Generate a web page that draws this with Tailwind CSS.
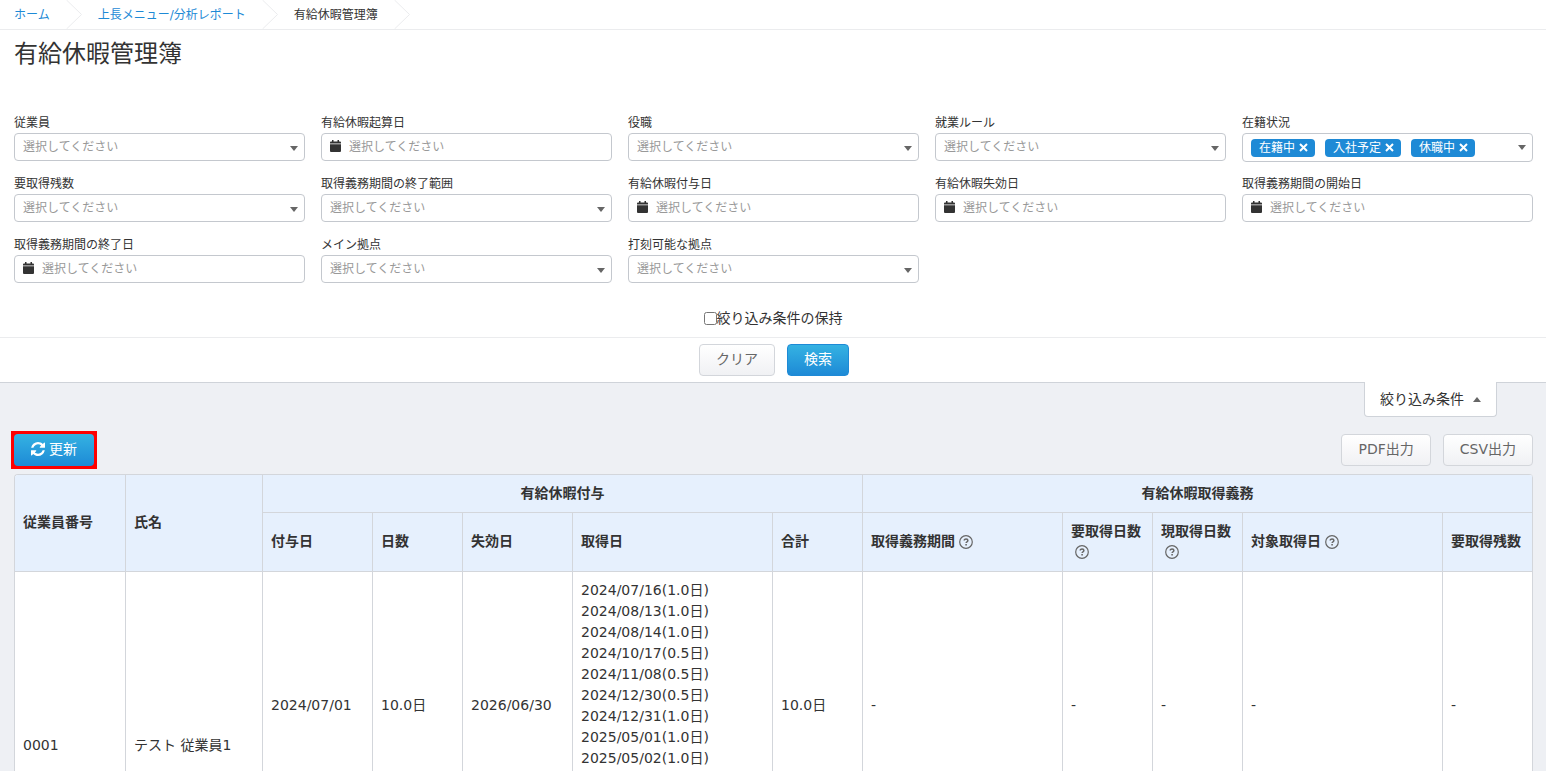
<!DOCTYPE html>
<html lang="ja">
<head>
  <meta charset="UTF-8" />
  <meta name="viewport" content="width=device-width, initial-scale=1.0" />
  <title>有給休暇管理簿</title>
  <script src="https://cdn.jsdelivr.net/npm/@tailwindcss/browser@4"></script>
</head>
<body class="h-screen overflow-hidden bg-[#eef0f4] font-['DejaVu_Sans','Noto_Sans_CJK_JP',sans-serif] text-sm text-[#333]">

  <!-- Icons -->
  <svg class="hidden">
    <symbol id="calendar" viewBox="0 0 11 12">
      <path d="M2 0h1.500v1.500h4V0H9v1.500h1a1 1 0 0 1 1 1V3.500H0V2.500a1 1 0 0 1 1-1h1zM0 4.200h11V11a1 1 0 0 1-1 1H1a1 1 0 0 1-1-1z" fill="currentColor" />
    </symbol>
    <symbol id="caret" viewBox="0 0 8 5">
      <path d="M0 0h8L4 5z" fill="currentColor" />
    </symbol>
    <symbol id="crumb" viewBox="0 0 16 29">
      <path d="M.5 0l15 14.500L.5 29" fill="none" stroke="#ebecee" />
    </symbol>
    <symbol id="close" viewBox="0 0 9 9">
      <path d="M1 1l7 7M8 1L1 8" fill="none" stroke="currentColor" stroke-width="2" />
    </symbol>
    <symbol id="help" viewBox="0 0 14 14">
      <circle cx="7" cy="7" r="6.300" fill="none" stroke="currentColor" stroke-width="1.200" />
      <path d="M5.200 5.600c0-2.200 3.700-2.100 3.700 0 0 1.300-1.800 1.200-1.800 2.500" fill="none" stroke="currentColor" stroke-width="1.500" />
      <path d="M6.300 9h1.600v1.500H6.300z" fill="currentColor" />
    </symbol>
    <symbol id="refresh" viewBox="0 0 1536 1536">
      <path d="M1511 928q0 5-1 7-64 268-268 434.500T764 1536q-146 0-282.500-55T238 1324l-129 129q-19 19-45 19t-45-19-19-45V960q0-26 19-45t45-19h448q26 0 45 19t19 45-19 45l-137 137q71 66 161 102t187 36q134 0 250-65t186-179q11-17 53-117 8-23 30-23h192q13 0 22.500 9.500t9.500 22.500zm25-800v448q0 26-19 45t-45 19h-448q-26 0-45-19t-19-45 19-45l138-138Q969 256 768 256q-134 0-250 65T332 500q-11 17-53 117-8 23-30 23H50q-13 0-22.500-9.500T18 608v-7q65-268 270-434.500T768 0q146 0 284 55.500T1297 212l130-129q19-19 45-19t45 19 19 45z" fill="currentColor" />
    </symbol>
  </svg>

  <div class="border-b border-[#cfd3d9] bg-white">
    <!-- Breadcrumb -->
    <nav class="flex h-[30px] items-center gap-4 border-b border-[#ebecee] pl-[14px] text-xs">
      <a href="#" class="text-[#1e8ad6]">ホーム</a>
      <svg class="h-[29px] w-4"><use href="#crumb" /></svg>
      <a href="#" class="text-[#1e8ad6]">上長メニュー/分析レポート</a>
      <svg class="h-[29px] w-4"><use href="#crumb" /></svg>
      <span>有給休暇管理簿</span>
      <svg class="h-[29px] w-4"><use href="#crumb" /></svg>
    </nav>

    <h1 class="mt-2 pl-[14px] text-2xl leading-8">有給休暇管理簿</h1>

    <!-- Filters -->
    <form>
      <div class="mt-[45px] grid grid-cols-5 items-start gap-x-4 pr-[13px] pl-[14px] text-xs">
        <div class="h-[61px]">
          <label for="employee" class="mb-[2px] block leading-4">従業員</label>
          <div class="relative">
            <select id="employee" class="h-7 w-full appearance-none rounded border border-[#c4c8ce] bg-white px-2 text-[#999]"><option>選択してください</option></select>
            <svg class="pointer-events-none absolute top-[13px] right-[7px] h-[5px] w-2 text-[#666]"><use href="#caret" /></svg>
          </div>
        </div>
        <div class="h-[61px]">
          <label for="startDate" class="mb-[2px] block leading-4">有給休暇起算日</label>
          <div class="flex h-7 items-center gap-2 rounded border border-[#c4c8ce] bg-white px-2">
            <svg class="mb-[2px] h-3 w-[11px] shrink-0"><use href="#calendar" /></svg>
            <input id="startDate" type="text" placeholder="選択してください" class="w-full outline-none placeholder:text-[#999]" />
          </div>
        </div>
        <div class="h-[61px]">
          <label for="position" class="mb-[2px] block leading-4">役職</label>
          <div class="relative">
            <select id="position" class="h-7 w-full appearance-none rounded border border-[#c4c8ce] bg-white px-2 text-[#999]"><option>選択してください</option></select>
            <svg class="pointer-events-none absolute top-[13px] right-[7px] h-[5px] w-2 text-[#666]"><use href="#caret" /></svg>
          </div>
        </div>
        <div class="h-[61px]">
          <label for="rule" class="mb-[2px] block leading-4">就業ルール</label>
          <div class="relative">
            <select id="rule" class="h-7 w-full appearance-none rounded border border-[#c4c8ce] bg-white px-2 text-[#999]"><option>選択してください</option></select>
            <svg class="pointer-events-none absolute top-[13px] right-[7px] h-[5px] w-2 text-[#666]"><use href="#caret" /></svg>
          </div>
        </div>
        <div class="h-[61px]" role="group" aria-labelledby="statusLabel">
          <span id="statusLabel" class="mb-[2px] block leading-4">在籍状況</span>
          <div class="flex h-[29px] items-center gap-[10px] rounded border border-[#c4c8ce] bg-white pr-[6px] pl-2 text-white">
            <button type="button" class="flex h-[18px] items-center gap-1 rounded bg-[#1e8ad6] pr-[7px] pl-2 leading-4">在籍中<svg class="h-[9px] w-[9px]"><use href="#close" /></svg></button>
            <button type="button" class="flex h-[18px] items-center gap-1 rounded bg-[#1e8ad6] pr-[7px] pl-2 leading-4">入社予定<svg class="h-[9px] w-[9px]"><use href="#close" /></svg></button>
            <button type="button" class="flex h-[18px] items-center gap-1 rounded bg-[#1e8ad6] pr-[7px] pl-2 leading-4">休職中<svg class="h-[9px] w-[9px]"><use href="#close" /></svg></button>
            <svg class="ml-auto h-[5px] w-2 text-[#666]"><use href="#caret" /></svg>
          </div>
        </div>

        <div class="h-[61px]">
          <label for="remaining" class="mb-[2px] block leading-4">要取得残数</label>
          <div class="relative">
            <select id="remaining" class="h-7 w-full appearance-none rounded border border-[#c4c8ce] bg-white px-2 text-[#999]"><option>選択してください</option></select>
            <svg class="pointer-events-none absolute top-[13px] right-[7px] h-[5px] w-2 text-[#666]"><use href="#caret" /></svg>
          </div>
        </div>
        <div class="h-[61px]">
          <label for="endRange" class="mb-[2px] block leading-4">取得義務期間の終了範囲</label>
          <div class="relative">
            <select id="endRange" class="h-7 w-full appearance-none rounded border border-[#c4c8ce] bg-white px-2 text-[#999]"><option>選択してください</option></select>
            <svg class="pointer-events-none absolute top-[13px] right-[7px] h-[5px] w-2 text-[#666]"><use href="#caret" /></svg>
          </div>
        </div>
        <div class="h-[61px]">
          <label for="grantDate" class="mb-[2px] block leading-4">有給休暇付与日</label>
          <div class="flex h-7 items-center gap-2 rounded border border-[#c4c8ce] bg-white px-2">
            <svg class="mb-[2px] h-3 w-[11px] shrink-0"><use href="#calendar" /></svg>
            <input id="grantDate" type="text" placeholder="選択してください" class="w-full outline-none placeholder:text-[#999]" />
          </div>
        </div>
        <div class="h-[61px]">
          <label for="expireDate" class="mb-[2px] block leading-4">有給休暇失効日</label>
          <div class="flex h-7 items-center gap-2 rounded border border-[#c4c8ce] bg-white px-2">
            <svg class="mb-[2px] h-3 w-[11px] shrink-0"><use href="#calendar" /></svg>
            <input id="expireDate" type="text" placeholder="選択してください" class="w-full outline-none placeholder:text-[#999]" />
          </div>
        </div>
        <div class="h-[61px]">
          <label for="dutyStart" class="mb-[2px] block leading-4">取得義務期間の開始日</label>
          <div class="flex h-7 items-center gap-2 rounded border border-[#c4c8ce] bg-white px-2">
            <svg class="mb-[2px] h-3 w-[11px] shrink-0"><use href="#calendar" /></svg>
            <input id="dutyStart" type="text" placeholder="選択してください" class="w-full outline-none placeholder:text-[#999]" />
          </div>
        </div>

        <div class="h-[61px]">
          <label for="dutyEnd" class="mb-[2px] block leading-4">取得義務期間の終了日</label>
          <div class="flex h-7 items-center gap-2 rounded border border-[#c4c8ce] bg-white px-2">
            <svg class="mb-[2px] h-3 w-[11px] shrink-0"><use href="#calendar" /></svg>
            <input id="dutyEnd" type="text" placeholder="選択してください" class="w-full outline-none placeholder:text-[#999]" />
          </div>
        </div>
        <div class="h-[61px]">
          <label for="mainSite" class="mb-[2px] block leading-4">メイン拠点</label>
          <div class="relative">
            <select id="mainSite" class="h-7 w-full appearance-none rounded border border-[#c4c8ce] bg-white px-2 text-[#999]"><option>選択してください</option></select>
            <svg class="pointer-events-none absolute top-[13px] right-[7px] h-[5px] w-2 text-[#666]"><use href="#caret" /></svg>
          </div>
        </div>
        <div class="h-[61px]">
          <label for="stampSite" class="mb-[2px] block leading-4">打刻可能な拠点</label>
          <div class="relative">
            <select id="stampSite" class="h-7 w-full appearance-none rounded border border-[#c4c8ce] bg-white px-2 text-[#999]"><option>選択してください</option></select>
            <svg class="pointer-events-none absolute top-[13px] right-[7px] h-[5px] w-2 text-[#666]"><use href="#caret" /></svg>
          </div>
        </div>
      </div>

      <div class="mt-[10px] flex h-[30px] items-start justify-center border-b border-[#ebecee]">
        <input id="keep" type="checkbox" class="mt-1 h-[13px] w-[13px]" />
        <label for="keep" class="leading-5">絞り込み条件の保持</label>
      </div>
      <div class="flex h-11 items-center justify-center gap-3 pl-[2px]">
        <button type="reset" class="h-8 rounded border border-[#d3d6db] bg-linear-to-b from-white to-[#f0f1f4] px-4 pb-[2px] text-[#666]">クリア</button>
        <button type="submit" class="h-8 rounded border border-[#1e8ad6] bg-linear-to-b from-[#35b2e2] to-[#1e8ad6] px-4 pb-[2px] text-white">検索</button>
      </div>
    </form>
  </div>

  <!-- Filter toggle -->
  <div class="-mt-px flex justify-end pr-[49px]">
    <button class="flex h-[35px] items-center gap-[9px] rounded-b border border-t-0 border-[#cfd3d9] bg-white px-[15px]">
      絞り込み条件
      <svg class="h-[5px] w-2 rotate-180 text-[#666]"><use href="#caret" /></svg>
    </button>
  </div>

  <main class="mt-[17px] pr-[13px] pl-[14px]">
    <div class="flex items-center justify-between">
      <div class="-m-[3px] border-4 border-[#f00]">
        <button class="-m-px flex h-8 items-center gap-1 rounded bg-linear-to-b from-[#35b2e2] to-[#1e8ad6] px-[17px] pb-[2px] text-white">
          <svg class="h-[14px] w-[14px]"><use href="#refresh" /></svg>
          更新
        </button>
      </div>
      <div class="flex gap-3">
        <button class="h-8 rounded border border-[#d3d6db] bg-linear-to-b from-white to-[#f0f1f4] px-4 pb-[2px] text-[#666]">PDF出力</button>
        <button class="h-8 rounded border border-[#d3d6db] bg-linear-to-b from-white to-[#f0f1f4] px-4 pb-[2px] text-[#666]">CSV出力</button>
      </div>
    </div>

    <!-- Leave table -->
    <div class="mt-2 overflow-hidden rounded-t border-t border-l border-[#d3d6db] bg-white">
      <table class="w-full table-fixed border-separate border-spacing-0 text-left leading-[21px] [&_td]:border-r [&_td]:border-b [&_td]:border-[#d3d6db] [&_td]:px-2 [&_th]:border-r [&_th]:border-b [&_th]:border-[#d3d6db] [&_th]:px-2">
        <colgroup>
          <col class="w-[111px]" />
          <col class="w-[137px]" />
          <col class="w-[110px]" />
          <col class="w-[90px]" />
          <col class="w-[110px]" />
          <col class="w-[200px]" />
          <col class="w-[90px]" />
          <col class="w-[200px]" />
          <col class="w-[90px]" />
          <col class="w-[90px]" />
          <col class="w-[200px]" />
          <col class="w-[90px]" />
        </colgroup>
        <thead class="bg-[#e6f0fd]">
          <tr class="h-[38px]">
            <th rowspan="2" class="pb-[2px]">従業員番号</th>
            <th rowspan="2" class="pb-[2px]">氏名</th>
            <th colspan="5" class="text-center">有給休暇付与</th>
            <th colspan="5" class="text-center">有給休暇取得義務</th>
          </tr>
          <tr class="h-[59px] [&_th]:pb-[2px]">
            <th>付与日</th>
            <th>日数</th>
            <th>失効日</th>
            <th>取得日</th>
            <th>合計</th>
            <th>取得義務期間<svg class="ml-1 inline h-[14px] w-[14px] text-[#666]"><use href="#help" /></svg></th>
            <th class="whitespace-nowrap">要取得日数<svg class="my-[3px] ml-1 block h-[14px] w-[14px] text-[#666]"><use href="#help" /></svg></th>
            <th class="whitespace-nowrap">現取得日数<svg class="my-[3px] ml-1 block h-[14px] w-[14px] text-[#666]"><use href="#help" /></svg></th>
            <th>対象取得日<svg class="ml-1 inline h-[14px] w-[14px] text-[#666]"><use href="#help" /></svg></th>
            <th class="whitespace-nowrap">要取得残数</th>
          </tr>
        </thead>
        <tbody>
          <tr class="h-[268px]">
            <td rowspan="2">0001</td>
            <td rowspan="2">テスト 従業員1</td>
            <td>2024/07/01</td>
            <td>10.0日</td>
            <td>2026/06/30</td>
            <td class="pt-2 align-top">
              <ul>
                <li>2024/07/16(1.0日)</li>
                <li>2024/08/13(1.0日)</li>
                <li>2024/08/14(1.0日)</li>
                <li>2024/10/17(0.5日)</li>
                <li>2024/11/08(0.5日)</li>
                <li>2024/12/30(0.5日)</li>
                <li>2024/12/31(1.0日)</li>
                <li>2025/05/01(1.0日)</li>
                <li>2025/05/02(1.0日)</li>
              </ul>
            </td>
            <td>10.0日</td>
            <td>-</td>
            <td>-</td>
            <td>-</td>
            <td>-</td>
            <td>-</td>
          </tr>
          <tr class="h-20">
            <td></td>
            <td></td>
            <td></td>
            <td></td>
            <td></td>
            <td></td>
            <td></td>
            <td></td>
            <td></td>
            <td></td>
          </tr>
        </tbody>
      </table>
    </div>
  </main>
</body>
</html>
